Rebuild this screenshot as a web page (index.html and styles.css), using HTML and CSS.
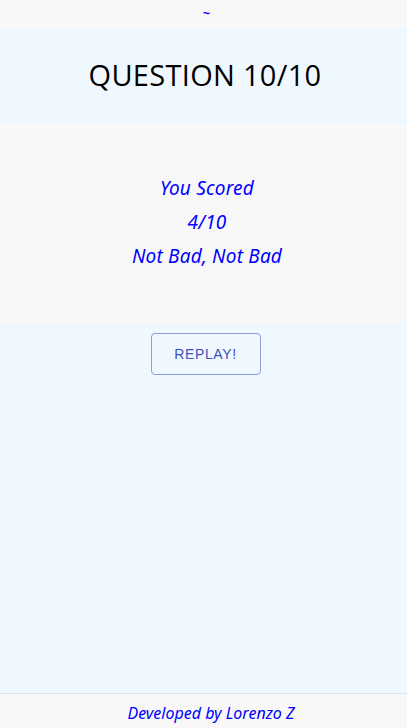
FILE: index.html
```html
<!DOCTYPE html>
<html>
<head>
<meta charset="utf-8">
<link rel="stylesheet" href="styles.css">
</head>
<body>
<div class="page">
  <div class="topbar">~</div>
  <header class="header"><h1 class="title">QUESTION 10/10</h1></header>
  <section class="score">
    <p class="line">You Scored</p>
    <p class="line">4/10</p>
    <p class="line">Not Bad, Not Bad</p>
  </section>
  <main class="main">
    <button class="replay">REPLAY!</button>
  </main>
  <footer class="footer">Developed by Lorenzo Z</footer>
</div>
</body>
</html>
```
FILE: styles.css
```css
html, body { margin: 0; padding: 0; }
body { background: #f0f8ff; font-family: "Open Sans", "Noto Sans", sans-serif; }
.page { display: flex; flex-direction: column; min-height: 100vh; }
.topbar { height: 28px; background: #f8f8f8; color: #0000ff; font-size: 13px; line-height: 26px; text-align: center; padding-left: 6px; font-weight: 700; }
.header { height: 96px; background: #f0f8ff; display: flex; align-items: center; justify-content: center; padding-left: 3px; }
.title { margin: 0 0 4px; font-weight: 400; font-size: 29px; color: #000; letter-spacing: 0.3px; }
.score { background: #f8f8f8; padding: 47px 0 50px 7px; text-align: center; }
.line { margin: 0; font-style: italic; color: #0000ff; font-size: 19px; line-height: 34px; font-family: "Noto Sans", "Open Sans", sans-serif; letter-spacing: 0.2px; }
.main { flex: 1; display: flex; flex-direction: column; align-items: center; padding: 10px 0 0 4px; }
.replay { width: 110px; height: 42px; background: transparent; border: 1px solid #8c9ce0; border-radius: 4px; color: #3f51b5; font-family: "Liberation Sans", Arial, sans-serif; font-size: 14px; letter-spacing: 0.6px; cursor: pointer; }
.footer { height: 34px; border-top: 1px solid #dde6ee; background: #f8f8f8; text-align: center; color: #0000ff; font-style: italic; font-size: 16px; line-height: 38px; font-family: "Noto Sans", "Open Sans", sans-serif; padding-left: 15px; }
```
